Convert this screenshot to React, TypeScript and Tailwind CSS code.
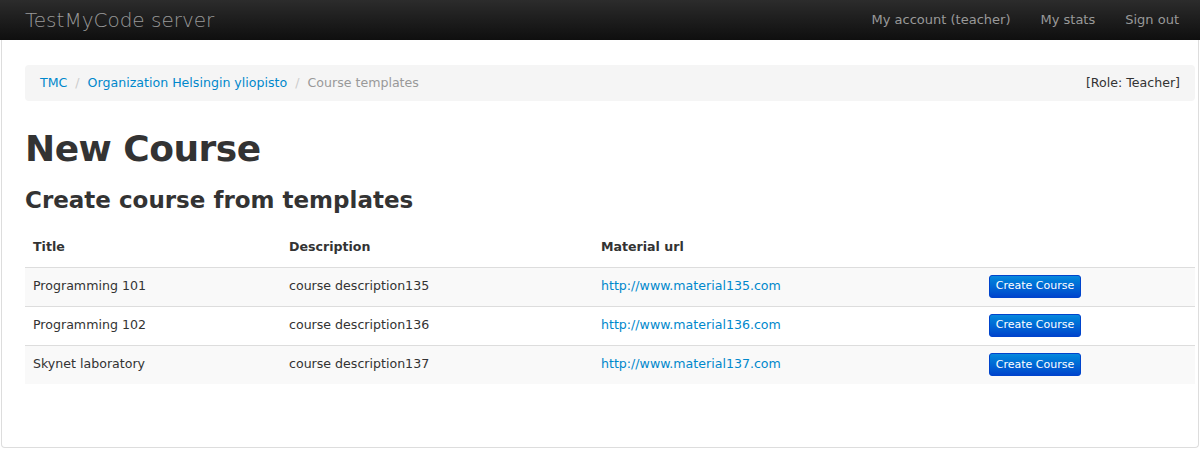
const rows = [
  { title: 'Programming 101', desc: 'course description135', url: 'http://www.material135.com' },
  { title: 'Programming 102', desc: 'course description136', url: 'http://www.material136.com' },
  { title: 'Skynet laboratory', desc: 'course description137', url: 'http://www.material137.com' },
];

export default function App() {
  return (
    <div className="min-h-[449px] bg-white text-[12.6px] text-[#333] font-['DejaVu_Sans',sans-serif]">
      {/* Navbar */}
      <div className="h-10 flex items-center justify-between bg-gradient-to-b from-[#2c2c2c] to-[#0f0f0f] pl-[25px] pr-[21px]">
        <a className="text-[20px] font-extralight text-[#999] leading-none">TestMyCode server</a>
        <nav className="flex items-center gap-[30px] text-[13px] text-[#999]">
          <a>My account (teacher)</a>
          <a>My stats</a>
          <a>Sign out</a>
        </nav>
      </div>

      {/* Main panel */}
      <div className="mx-px h-[408px] border border-t-0 border-[#ddd] rounded-b-[4px] pl-[23px] pr-[3px] pt-[25px]">
        <div className="flex justify-between items-center h-9 bg-[#f5f5f5] rounded-[4px] px-[15px]">
          <div className="flex items-center">
            <a className="text-[#0088cc]">TMC</a>
            <span className="text-[#ccc] px-[8px]">/</span>
            <a className="text-[#0088cc]">Organization Helsingin yliopisto</a>
            <span className="text-[#ccc] px-[8px]">/</span>
            <span className="text-[#999]">Course templates</span>
          </div>
          <span>[Role: Teacher]</span>
        </div>

        <h1 className="mt-[28px] text-[36px] tracking-[-0.5px] font-bold leading-[40px]">New Course</h1>
        <h2 className="mt-[11px] text-[23px] font-bold leading-[40px]">Create course from templates</h2>

        <table className="mt-[9px] w-full border-collapse">
          <thead>
            <tr className="h-[38px] text-left">
              <th className="w-[256px] px-2 font-bold">Title</th>
              <th className="w-[312px] px-2 font-bold">Description</th>
              <th className="w-[388px] px-2 font-bold">Material url</th>
              <th className="px-2"></th>
            </tr>
          </thead>
          <tbody>
            {rows.map((r, i) => (
              <tr key={r.title} className={`h-[39px] border-t border-[#ddd] ${i % 2 === 0 ? 'bg-[#f9f9f9]' : ''}`}>
                <td className="px-2">{r.title}</td>
                <td className="px-2">{r.desc}</td>
                <td className="px-2">
                  <a className="text-[#0088cc]">{r.url}</a>
                </td>
                <td className="px-2">
                  <button className="h-[23px] w-[92px] text-[11px] text-white rounded-[3px] border border-[#0044cc] bg-gradient-to-b from-[#0a88dc] to-[#0044cc]">
                    Create Course
                  </button>
                </td>
              </tr>
            ))}
          </tbody>
        </table>
      </div>
    </div>
  );
}
